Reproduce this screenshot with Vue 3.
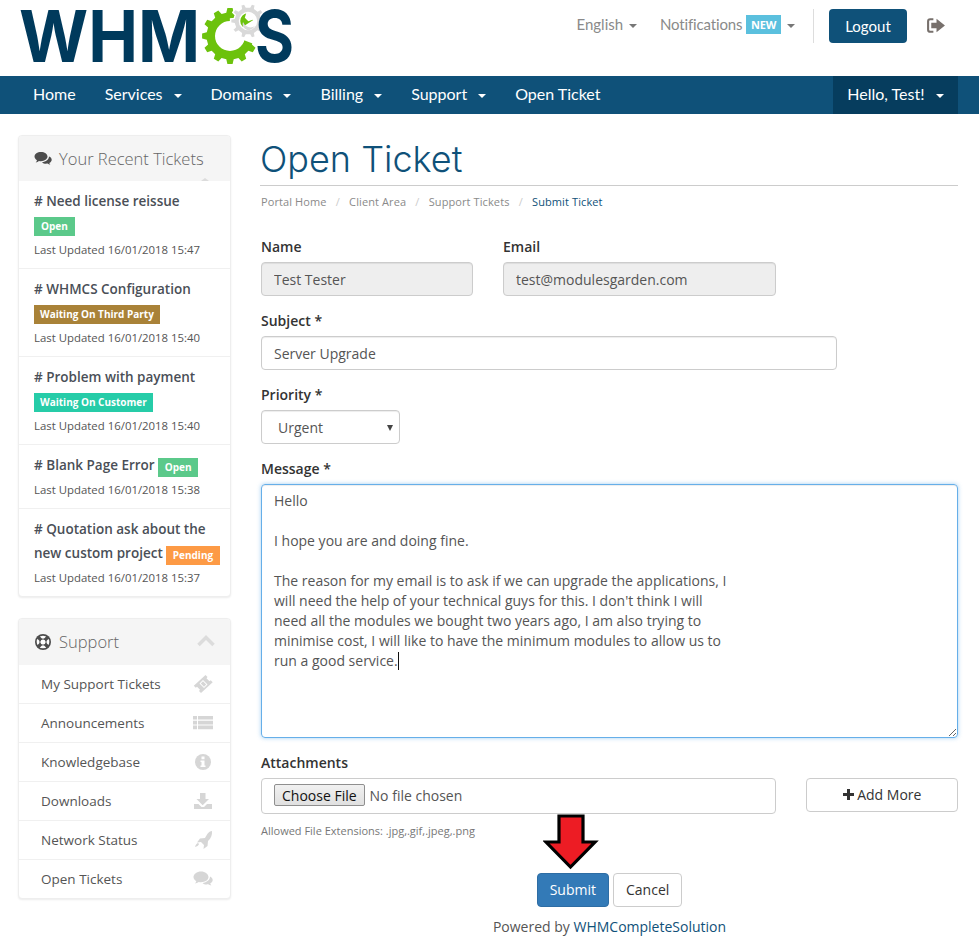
<template>
  <div class="page">
    <header class="topbar">
      <svg class="logo" width="273" height="70" viewBox="0 0 273 70">
        <text class="logo-text" x="-1" y="62" font-size="72" textLength="181" lengthAdjust="spacingAndGlyphs">WHM</text>
        <g transform="translate(181 3)">
          <path :d="greenGear" fill="#6cc20c" fill-rule="evenodd" />
          <path d="M29 32 L66 8 L66 34 L56 42 Z" fill="#fff" />
          <path :d="greyGear" fill="#d9d9d9" stroke="#fff" stroke-width="1.5" fill-rule="evenodd" />
          <path d="M42 19 a6 6 0 0 0 9 7 l3 -3 a8 8 0 0 1 -12 -4z" fill="#d9d9d9" />
        </g>
        <text class="logo-text" x="235" y="62" font-size="72" textLength="39" lengthAdjust="spacingAndGlyphs">S</text>
      </svg>
      <div class="top-right">
        <span class="top-link">English <i class="caret grey"></i></span>
        <span class="top-link notif">Notifications <b class="new">NEW</b> <i class="caret grey"></i></span>
        <span class="divider"></span>
        <button class="logout">Logout</button>
        <svg class="signout" width="20" height="17" viewBox="0 0 19 16">
          <path d="M7 2H4a2 2 0 0 0-2 2v8a2 2 0 0 0 2 2h3" fill="none" stroke="#77706c" stroke-width="2" />
          <path d="M5 5.500h5V1.500l8 6.500-8 6.500v-4H5z" fill="#77706c" />
        </svg>
      </div>
    </header>

    <nav class="navbar">
      <a v-for="item in navItems" :key="item.label" class="nav-item">{{ item.label }}<i v-if="item.caret" class="caret white"></i></a>
      <a class="nav-item hello">Hello, Test!<i class="caret white"></i></a>
    </nav>

    <div class="content">
      <aside class="sidebar">
        <section class="panel">
          <div class="panel-head">
            <svg class="head-icon" width="18" height="15" viewBox="0 0 18 15">
              <path d="M7 1C3.400 1 .5 3 .5 5.600c0 1.500 1 2.800 2.500 3.700-.2.800-.7 1.500-1.300 2.100 1.200-.2 2.400-.7 3.300-1.400.7.100 1.300.2 2 .2 3.600 0 6.500-2 6.500-4.600S10.600 1 7 1z" fill="#4d4d4d" />
              <path d="M15 5.500c0 3-3 5.400-7 5.700 1 1 2.500 1.500 4.100 1.500.5 0 1 0 1.400-.1.800.6 1.800 1 2.900 1.200-.5-.5-.9-1.100-1.100-1.800 1.500-.8 2.400-2 2.400-3.300 0-1.400-1-2.600-2.700-3.200z" fill="#4d4d4d" />
            </svg>
            <span>Your Recent Tickets</span>
            <i class="notch"></i>
          </div>
          <div v-for="t in tickets" :key="t.title" class="ticket">
            <div class="ticket-title"># {{ t.title }}<span v-if="t.inline" class="badge inline" :class="t.cls">{{ t.status }}</span></div>
            <div v-if="!t.inline" class="badge-row"><span class="badge" :class="t.cls">{{ t.status }}</span></div>
            <div class="ticket-meta">Last Updated {{ t.updated }}</div>
          </div>
        </section>

        <section class="panel">
          <div class="panel-head">
            <svg class="head-icon ring" width="18" height="18" viewBox="0 0 18 18">
              <circle cx="9" cy="9" r="8" fill="#4d4d4d" />
              <circle cx="9" cy="9" r="6.300" fill="#fff" />
              <circle cx="9" cy="9" r="3.600" fill="#4d4d4d" />
              <circle cx="9" cy="9" r="2.600" fill="#fff" />
              <path d="M4 4l3 3M14 4l-3 3M4 14l3-3M14 14l-3-3" stroke="#4d4d4d" stroke-width="3.200" />
            </svg>
            <span>Support</span>
            <svg class="chev" width="18" height="12" viewBox="0 0 18 12">
              <path d="M1.500 10 9 2.500 16.500 10" fill="none" stroke="#dcdcdc" stroke-width="3.500" />
            </svg>
          </div>
          <div v-for="l in supportLinks" :key="l.label" class="side-link">
            <span>{{ l.label }}</span>
            <svg class="side-icon" width="20" height="18" viewBox="0 0 20 18" v-html="l.icon"></svg>
          </div>
        </section>
      </aside>

      <main class="main">
        <h1 class="title">Open Ticket</h1>
        <div class="breadcrumb">
          <span>Portal Home</span><em>/</em><span>Client Area</span><em>/</em><span>Support Tickets</span><em>/</em><span class="current">Submit Ticket</span>
        </div>

        <div class="row">
          <div class="field name-field">
            <label>Name</label>
            <input class="control" disabled value="Test Tester" />
          </div>
          <div class="field email-field">
            <label>Email</label>
            <input class="control" disabled value="test@modulesgarden.com" />
          </div>
        </div>
        <div class="field subject-field">
          <label>Subject *</label>
          <input class="control" value="Server Upgrade" />
        </div>
        <div class="field priority-field">
          <label>Priority *</label>
          <div class="select-wrap">
            <select class="control">
              <option>Urgent</option>
            </select>
          </div>
        </div>
        <div class="field">
          <label>Message *</label>
          <div class="message">{{ message }}<span class="text-caret"></span></div>
        </div>
        <div class="field attach-field">
          <label>Attachments</label>
          <div class="attach-row">
            <div class="file-box"><input type="file" class="file" /></div>
            <button class="add-more">
              <svg width="11" height="11" viewBox="0 0 11 11"><path d="M4 0h3v4h4v3H7v4H4V7H0V4h4z" fill="#333" /></svg>
              Add More
            </button>
          </div>
        </div>
        <div class="hint">Allowed File Extensions: .jpg,.gif,.jpeg,.png</div>

        <div class="actions">
          <button class="btn primary">Submit</button>
          <button class="btn">Cancel</button>
          <svg class="arrow" width="56" height="56" viewBox="0 0 56 56">
            <path d="M16 2h24v26h12L27.500 53 3 28h13z" fill="#ed1c24" stroke="#000" stroke-width="3.200" />
          </svg>
        </div>
        <div class="powered">Powered by <a>WHMCompleteSolution</a></div>
      </main>
    </div>
  </div>
</template>

<script setup>
const gearPath = (cx, cy, outer, root, hole, teeth) => {
  const pts = []
  const step = (Math.PI * 2) / teeth
  for (let i = 0; i < teeth; i++) {
    const a = i * step
    const at = (r, o) => {
      const x = cx + r * Math.cos(a + o * step)
      const y = cy + r * Math.sin(a + o * step)
      return x.toFixed(1) + ' ' + y.toFixed(1)
    }
    pts.push(at(root, -0.3), at(outer, -0.18), at(outer, 0.18), at(root, 0.3))
  }
  return (
    'M' + pts.join('L') + 'Z' +
    `M${cx + hole} ${cy}a${hole} ${hole} 0 1 0 ${-2 * hole} 0a${hole} ${hole} 0 1 0 ${2 * hole} 0Z`
  )
}

const greenGear = gearPath(29, 33, 28, 23.5, 15, 12)
const greyGear = gearPath(47, 18, 17.5, 14, 8.5, 10)

const navItems = [
  { label: 'Home' },
  { label: 'Services', caret: true },
  { label: 'Domains', caret: true },
  { label: 'Billing', caret: true },
  { label: 'Support', caret: true },
  { label: 'Open Ticket' }
]

const tickets = [
  { title: 'Need license reissue', status: 'Open', cls: 'open', updated: '16/01/2018 15:47' },
  { title: 'WHMCS Configuration', status: 'Waiting On Third Party', cls: 'third', updated: '16/01/2018 15:40' },
  { title: 'Problem with payment', status: 'Waiting On Customer', cls: 'customer', updated: '16/01/2018 15:40' },
  { title: 'Blank Page Error', status: 'Open', cls: 'open', updated: '16/01/2018 15:38', inline: true },
  { title: 'Quotation ask about the new custom project', status: 'Pending', cls: 'pending', updated: '16/01/2018 15:37', inline: true }
]

const grey = '#d6d6d6'
const supportLinks = [
  {
    label: 'My Support Tickets',
    icon: `<path d="M12.500 0l2 2-1 1.200 3 3 1.200-1 2 2L8 18l-2-2 1-1.200-3-3-1.200 1-2-2z" fill="${grey}"/><path d="M6.500 8.500l4.500 4.500 3.500-3.500L10 5z" fill="#fff"/><path d="M7.800 8.500l3.200 3.200 2.200-2.200L10 6.300z" fill="${grey}"/>`
  },
  {
    label: 'Announcements',
    icon: `<path d="M0 2h4v3.600H0zM5 2h15v3.600H5zM0 6.800h4v3.600H0zM5 6.800h15v3.600H5zM0 11.600h4v3.600H0zM5 11.600h15v3.600H5z" fill="${grey}"/>`
  },
  {
    label: 'Knowledgebase',
    icon: `<circle cx="10" cy="9" r="8" fill="${grey}"/><path d="M8.500 3.500h3v2.700h-3zM7.500 7.500h4v5h1V14h-5v-1.500h1V9h-1z" fill="#fff"/>`
  },
  {
    label: 'Downloads',
    icon: `<path d="M7 1h5.500v6H16l-6.300 6.200L3.500 7H7z" fill="${grey}"/><path d="M1 12h4.500l3 3h2.500l3-3H19v5H1z" fill="${grey}"/>`
  },
  {
    label: 'Network Status',
    icon: `<path d="M19 0c.3 4-1 7.500-4 10l-.5 5-4 3 .5-4-3-3-4 .5 3-4 5-.5C15 1.500 16 .5 19 0z" fill="${grey}"/><path d="M5 12c-1.500.5-2.500 2-3 4 2-.5 3.500-1.500 4-3z" fill="${grey}"/>`
  },
  {
    label: 'Open Tickets',
    icon: `<path d="M8 1.500C3.800 1.500 .5 4 .5 7c0 1.700 1 3.200 2.800 4.200-.2.900-.8 1.700-1.400 2.300 1.400-.2 2.800-.8 3.800-1.500.7.100 1.500.2 2.300.2 4.200 0 7.500-2.300 7.500-5.200S12.200 1.500 8 1.500z" fill="${grey}"/><path d="M17 6.500c0 3.400-3.200 6-7.500 6.400 1 1 2.500 1.500 4.200 1.500.5 0 1 0 1.500-.1.800.6 1.900 1 3.200 1.200-.5-.5-1-1.200-1.200-1.900 1.500-.8 2.500-2.100 2.500-3.500 0-1.600-1-2.900-2.700-3.600z" fill="${grey}"/>`
  }
]

const message = `Hello

I hope you are and doing fine.

The reason for my email is to ask if we can upgrade the applications, I
will need the help of your technical guys for this. I don't think I will
need all the modules we bought two years ago, I am also trying to
minimise cost, I will like to have the minimum modules to allow us to
run a good service.`
</script>

<style>
html, body { background: #fff; overflow: hidden; }
</style>

<style scoped>
.page {
  width: 979px;
  height: 942px;
  font-family: "Open Sans", "Liberation Sans", sans-serif;
  font-size: 14px;
  line-height: 20px;
  color: #333;
  overflow: hidden;
}

.topbar {
  height: 76px;
  display: flex;
  justify-content: space-between;
  padding: 0 33px 0 20px;
  box-sizing: border-box;
}
.logo { flex: none; }
.logo-text {
  fill: #003a5c;
  font-family: Inter, "Liberation Sans", sans-serif;
  font-weight: 700;
}

.top-right {
  display: flex;
  align-items: flex-start;
  padding-top: 9px;
  color: #8a8a8a;
  font-family: Lato, sans-serif;
  font-size: 15px;
}
.top-link {
  line-height: 31px;
  margin-right: 23px;
  white-space: nowrap;
}
.notif {
  margin-right: 18px;
  letter-spacing: -0.15px;
}
.new {
  display: inline-block;
  background: #5bc0de;
  color: #fff;
  font-family: "Open Sans", sans-serif;
  font-size: 11px;
  line-height: 19px;
  padding: 0 5px;
  vertical-align: 1px;
}
.caret {
  display: inline-block;
  width: 0;
  height: 0;
  border-left: 4px solid transparent;
  border-right: 4px solid transparent;
  vertical-align: 2px;
}
.caret.grey { border-top: 4px solid #777; margin-left: 2px; }
.caret.white { border-top: 4px solid #fff; margin-left: 11px; }
.divider {
  width: 1px;
  height: 34px;
  background: #ddd;
  margin-right: 15px;
}
.logout {
  width: 78px;
  height: 34px;
  border: 0;
  border-radius: 4px;
  background: #0f5179;
  color: #fff;
  font-family: Lato, sans-serif;
  font-size: 15px;
  margin-right: 19px;
}
.signout { margin-top: 8px; }

.navbar {
  height: 38px;
  background: #0f5179;
  display: flex;
  padding: 0 21px 0 18.500px;
  font-family: Lato, sans-serif;
  font-size: 16px;
  color: #fff;
}
.nav-item {
  padding: 0 14.500px;
  line-height: 36px;
  white-space: nowrap;
}
.hello {
  margin-left: auto;
  background: #063d5e;
}

.content {
  display: flex;
  gap: 30px;
  padding: 21px 21px 0 18px;
}
.sidebar {
  width: 213px;
  flex: none;
  display: flex;
  flex-direction: column;
  gap: 21px;
}
.panel {
  border: 1px solid #eee;
  border-radius: 4px;
  box-shadow: 0 1px 2px rgba(0, 0, 0, 0.08);
  background: #fff;
}
.panel-head {
  position: relative;
  height: 45px;
  background: #f5f5f5;
  display: flex;
  align-items: center;
  padding: 0 15px;
  font-family: "Open Sans", sans-serif;
  font-weight: 300;
  font-size: 16.500px;
  color: #666;
  border-radius: 3px 3px 0 0;
}
.panel + .panel .panel-head { height: 46px; }
.head-icon { margin-right: 7px; flex: none; }
.chev { position: absolute; right: 15px; top: 16px; }
.notch {
  position: absolute;
  right: 21px;
  bottom: 0;
  width: 0;
  height: 0;
  border-left: 4px solid transparent;
  border-right: 4px solid transparent;
  border-bottom: 3px solid #dcdcdc;
}

.ticket {
  padding: 8px 8px 8px 15px;
  border-bottom: 1px solid #f0f0f0;
}
.ticket:last-child { border-bottom: 0; }
.ticket-title {
  font-size: 13.500px;
  font-weight: 600;
  line-height: 24px;
  color: #4a4f57;
}
.badge-row {
  display: flex;
  margin-top: 4px;
  margin-bottom: 4px;
}
.badge {
  display: inline-block;
  height: 19px;
  line-height: 19px;
  padding: 0 6px;
  font-size: 10px;
  font-weight: 700;
  color: #fff;
  white-space: nowrap;
}
.badge.inline {
  margin-left: 3px;
  vertical-align: -1px;
}
.open { background: #5bc98a; padding: 0 7px; }
.third { background: #a98238; }
.customer { background: #26cca8; }
.pending { background: #fd9a45; padding: 0 7px; }
.ticket-meta {
  margin-top: 3px;
  font-size: 11.400px;
  color: #555;
}

.side-link {
  height: 38px;
  display: flex;
  align-items: center;
  justify-content: space-between;
  padding: 0 17px 0 22px;
  border-bottom: 1px solid #f0f0f0;
  font-size: 13.500px;
  color: #555;
}
.side-link:last-child { border-bottom: 0; }

.main {
  width: 697px;
  flex: none;
}
.title {
  margin: 0 0 0 -1px;
  height: 50px;
  border-bottom: 1px solid #ccc;
  font-family: Inter, sans-serif;
  font-weight: 300;
  font-size: 36px;
  line-height: 49px;
  color: #0f5179;
}
.breadcrumb {
  margin-top: 6px;
  height: 20px;
  font-size: 11px;
  letter-spacing: 0.1px;
  color: #8a8a8a;
}
.breadcrumb em {
  font-style: normal;
  color: #ccc;
  margin: 0 9.200px;
}
.current { color: #0f5179; }

.row {
  display: flex;
  gap: 30px;
  margin-top: 25px;
}
.name-field { width: 212px; }
.email-field { width: 273px; }
.subject-field { width: 576px; }
.priority-field { width: 139px; }
.field { margin-bottom: 15px; }
.field label {
  display: block;
  font-weight: 600;
  margin-bottom: 5px;
  color: #333;
}
.control {
  display: block;
  width: 100%;
  height: 34px;
  box-sizing: border-box;
  padding: 6px 12px;
  border: 1px solid #ccc;
  border-radius: 4px;
  background: #fff;
  font-family: inherit;
  font-size: 14px;
  color: #555;
  box-shadow: inset 0 1px 1px rgba(0, 0, 0, 0.075);
}
.control:disabled { background: #eee; color: #555; }
select.control {
  appearance: none;
  padding-left: 16px;
}
.select-wrap { position: relative; }
.select-wrap::after {
  content: "";
  position: absolute;
  right: 7px;
  top: 15px;
  border-left: 3.500px solid transparent;
  border-right: 3.500px solid transparent;
  border-top: 6px solid #444;
}

.message {
  height: 254px;
  box-sizing: border-box;
  padding: 6px 12px;
  border: 1px solid #66afe9;
  border-radius: 4px;
  white-space: pre-wrap;
  color: #555;
  resize: vertical;
  overflow: auto;
  box-shadow: inset 0 1px 1px rgba(0, 0, 0, 0.075), 0 0 4px rgba(102, 175, 233, 0.6);
}
.text-caret {
  display: inline-block;
  height: 18px;
  border-left: 1px solid #111;
  vertical-align: -4px;
}

.attach-field { margin-bottom: 7px; }
.attach-row {
  display: flex;
  justify-content: space-between;
  align-items: flex-start;
}
.file-box {
  width: 515px;
  height: 36px;
  box-sizing: border-box;
  border: 1px solid #ccc;
  border-radius: 4px;
  padding: 5px 12px 7px;
  display: flex;
  align-items: center;
}
.file {
  font-family: inherit;
  font-size: 14px;
  color: #555;
}
.file::file-selector-button {
  height: 22px;
  padding: 0 7px;
  margin-right: 5px;
  border: 1px solid #8f8f8f;
  border-radius: 2px;
  background: linear-gradient(#f1f1f1, #e0e0e0);
  color: #111;
  font-family: inherit;
  font-size: 14px;
}
.add-more {
  width: 152px;
  height: 34px;
  border: 1px solid #ccc;
  border-radius: 4px;
  background: #fff;
  font-family: inherit;
  font-size: 14px;
  color: #333;
  padding-bottom: 2px;
}
.hint {
  font-size: 11px;
  color: #777;
}

.actions {
  position: relative;
  display: flex;
  justify-content: center;
  gap: 4px;
  margin-top: 32px;
}
.btn {
  height: 34px;
  padding: 0 12px 2px;
  border: 1px solid #ccc;
  border-radius: 4px;
  background: #fff;
  font-family: inherit;
  font-size: 14px;
  color: #333;
}
.btn.primary {
  background: #337ab7;
  border-color: #2e6da4;
  color: #fff;
}
.arrow {
  position: absolute;
  left: 282px;
  top: -59px;
}
.powered {
  margin-top: 10px;
  text-align: center;
  color: #555;
}
.powered a { color: #0f5179; }
</style>
